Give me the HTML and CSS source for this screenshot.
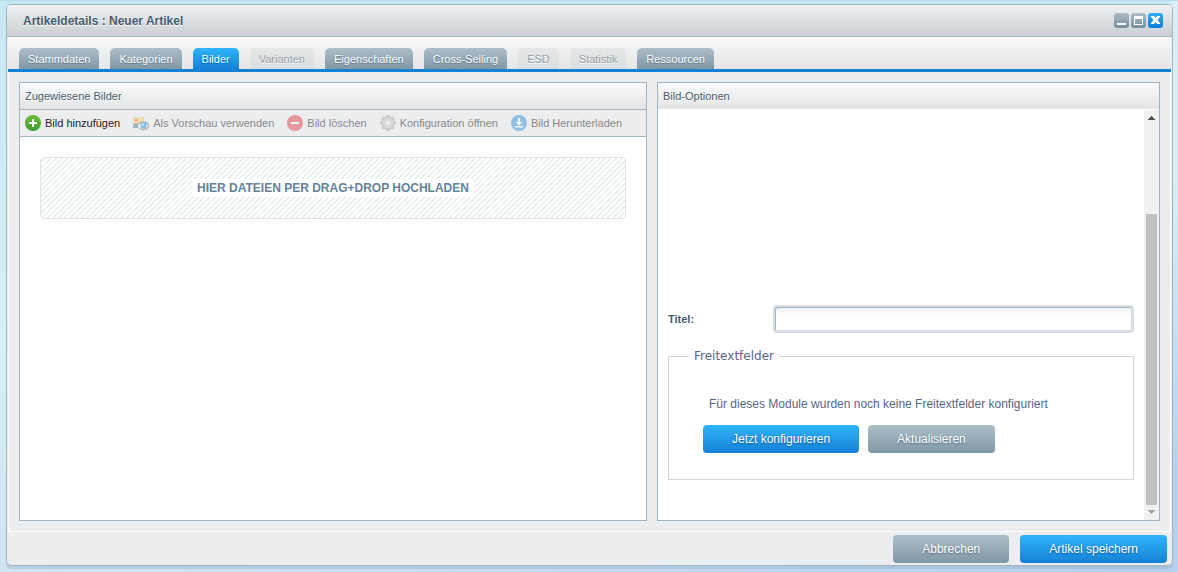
FILE: index.html
```html
<!DOCTYPE html>
<html lang="de">
<head>
<meta charset="utf-8">
<title>Artikeldetails : Neuer Artikel</title>
<link rel="stylesheet" href="styles.css">
</head>
<body>
<main class="window">
  <header class="titlebar">
    <h1 class="window-title">Artikeldetails : Neuer Artikel</h1>
    <div class="window-tools">
      <button class="tool" aria-label="Minimieren"><svg viewBox="0 0 15 15"><path d="M3 10h9v2H3z" fill="#fff"/></svg></button>
      <button class="tool" aria-label="Maximieren"><svg viewBox="0 0 15 15"><path fill-rule="evenodd" d="M3 3h9v9H3zM4 6v5h7V6z" fill="#fff"/></svg></button>
      <button class="tool tool-close" aria-label="Schließen"><svg viewBox="0 0 15 15"><path d="M3 3h3l1.500 2L9 3h3v1L9.500 7l2.500 3v1H9L7.500 9 6 11H3v-1l2.500-3L3 4z" fill="#fff"/></svg></button>
    </div>
  </header>
  <nav class="tabs">
    <button class="tab">Stammdaten</button>
    <button class="tab">Kategorien</button>
    <button class="tab tab-active">Bilder</button>
    <button class="tab" disabled>Varianten</button>
    <button class="tab">Eigenschaften</button>
    <button class="tab">Cross-Selling</button>
    <button class="tab" disabled>ESD</button>
    <button class="tab" disabled>Statistik</button>
    <button class="tab">Ressourcen</button>
  </nav>
  <div class="content">
    <section class="panel panel-images">
      <h2 class="panel-title">Zugewiesene Bilder</h2>
      <div class="toolbar">
        <button class="action"><svg class="icon" viewBox="0 0 16 16"><defs><linearGradient id="green" x2="0" y2="1"><stop stop-color="#6fbb3a"/><stop offset="1" stop-color="#3a9f2e"/></linearGradient></defs><circle cx="8" cy="8" r="8" fill="url(#green)"/><path d="M7 4h2v3h3v2H9v3H7V9H4V7h3z" fill="#fff"/></svg>Bild hinzufügen</button>
        <button class="action" disabled><svg class="icon" viewBox="0 0 16 16"><path d="M0 2h11v10H0z" fill="#fbcf70"/><path d="M0 9l3-1 3 1 5-2v6H0z" fill="#5f7fae"/><circle cx="3" cy="5" r="1.500" fill="#ee5a2b"/><path d="M4 11Q7 6.500 11 7q4 .5 4.800 4-2 3.500-5.800 3.500T4 11z" fill="#fff" stroke="#66737d" stroke-width="1.300"/><circle cx="10.500" cy="10.500" r="3.200" fill="#2c96d2"/><circle cx="9.800" cy="9.600" r="1.200" fill="#c4e7f8"/></svg>Als Vorschau verwenden</button>
        <button class="action" disabled><svg class="icon" viewBox="0 0 16 16"><circle cx="8" cy="8" r="8" fill="#e1434b"/><path d="M4 7h8v2H4z" fill="#fff"/></svg>Bild löschen</button>
        <button class="action" disabled><svg class="icon" viewBox="0 0 16 16"><g fill="#a6a8aa"><circle cx="8" cy="8" r="6.500"/><path d="M6.500 0h3l1 3h-5zM6.500 16h3l1-3h-5zM0 6.500v3l3 1v-5zM16 6.500v3l-3 1v-5z"/><path d="M6.500 0h3l1 3h-5zM6.500 16h3l1-3h-5zM0 6.500v3l3 1v-5zM16 6.500v3l-3 1v-5z" transform="rotate(45 8 8)"/></g><circle cx="8" cy="8" r="5.500" fill="#c4c6c8"/><circle cx="8" cy="8" r="2.800" fill="#f2f3f4" stroke="#a6a8aa" stroke-width=".6"/></svg>Konfiguration öffnen</button>
        <button class="action" disabled><svg class="icon" viewBox="0 0 16 16"><circle cx="8" cy="8" r="8" fill="#3c93d4"/><path d="M7 3h2v4h2.500L8 10.500 4.500 7H7zM4 11h8v1.500H4z" fill="#fff"/></svg>Bild Herunterladen</button>
      </div>
      <div class="drop-area">
        <div class="drop-zone"><span class="drop-text">HIER DATEIEN PER DRAG+DROP HOCHLADEN</span></div>
      </div>
    </section>
    <section class="panel panel-options">
      <h2 class="panel-title">Bild-Optionen</h2>
      <div class="options-body">
        <form class="options-form">
          <div class="field">
            <label class="field-label" for="titel">Titel:</label>
            <input class="field-input" id="titel" type="text">
          </div>
          <fieldset class="free-fields">
            <legend class="legend">Freitextfelder</legend>
            <p class="hint">Für dieses Module wurden noch keine Freitextfelder konfiguriert</p>
            <div class="free-actions">
              <button type="button" class="button button-primary">Jetzt konfigurieren</button>
              <button type="button" class="button">Aktualisieren</button>
            </div>
          </fieldset>
        </form>
        <div class="scrollbar" aria-hidden="true">
          <svg class="scroll-arrow" viewBox="0 0 15 17"><path d="M7 6h1v1h1v1h1v1h1v1H4V9h1V8h1V7h1z" fill="#505050"/></svg>
          <div class="scroll-track"><div class="scroll-thumb"></div></div>
          <svg class="scroll-arrow" viewBox="0 0 15 15"><path d="M4 5h7v1h-1v1H9v1H8v1H7V8H6V7H5V6H4z" fill="#a3a3a3"/></svg>
        </div>
      </div>
    </section>
  </div>
  <footer class="footer">
    <button class="button">Abbrechen</button>
    <button class="button button-primary">Artikel speichern</button>
  </footer>
</main>
</body>
</html>
```
FILE: styles.css
```css
* { box-sizing: border-box; }
body {
  margin: 0;
  height: 100vh;
  padding: 4px 5px 6px 6px;
  display: flex;
  font: 11px/16px "Liberation Sans", Arial, sans-serif;
  color: #475c6a;
  background:
    linear-gradient(#b9dae4, #b9dae4) top / 100% 1px no-repeat,
    linear-gradient(#d8eff5 30%, #b5d0f0 85%) right / 6px 100% no-repeat,
    linear-gradient(to right, #d0e4f1, #b5d0f0) bottom / 100% 6px no-repeat,
    linear-gradient(#c7e9f3, #d8eff5 60%, #d0e4f1);
}
h1, h2, p { margin: 0; font: inherit; }
button { font: inherit; color: inherit; border: 0; margin: 0; }
.window {
  flex: 1;
  display: flex;
  flex-direction: column;
  border: 1px solid #a3b4c1;
  border-radius: 5px;
  background: #ebedef;
  box-shadow: 0 3px 0 rgba(130, 160, 180, .3);
  overflow: hidden;
}
.titlebar {
  flex: none;
  height: 32px;
  display: flex;
  align-items: center;
  justify-content: space-between;
  padding: 0 9px 0 16px;
  border-bottom: 1px solid #a3b4c1;
  background: linear-gradient(#f0f1f2, #c8cfd4);
}
.window-title { font-size: 12px; font-weight: bold; text-shadow: 0 1px 0 #fff; }
.window-tools { display: flex; gap: 2px; }
.tool {
  width: 15px;
  height: 15px;
  padding: 0;
  border-radius: 3px;
  background: linear-gradient(#adbcc6, #758d9c);
}
.tool svg { display: block; width: 100%; height: 100%; }
.tool-close { background: linear-gradient(#2eb0fb, #0b7bd3); }
.tabs {
  flex: none;
  height: 35px;
  display: flex;
  align-items: flex-end;
  gap: 11px;
  margin: 0 1px;
  padding-left: 11px;
  border-bottom: 3px solid #1581d4;
  background: linear-gradient(#f8f8f8, #e3e5e7);
}
.tab {
  height: 21px;
  padding: 1px 9px 0;
  border-radius: 5px 5px 0 0;
  color: #fff;
  background: linear-gradient(#adbec8, #8098a6);
  text-shadow: 0 1px 1px #5c7180;
}
.tab-active { background: linear-gradient(#2fb4fb, #1581d4); text-shadow: 0 1px 1px #0c4dbb; }
.tab:disabled {
  color: #92a0aa;
  background: linear-gradient(#e4e6e7, #dcdfe1);
  text-shadow: 0 1px 0 #fff;
}
.content {
  flex: 1;
  min-height: 0;
  display: grid;
  grid-template-columns: 628fr 503fr;
  gap: 10px;
  margin: 0 1px;
  padding: 10px 10px;
  border: 1px solid #fff;
  border-top: 0;
}
.panel {
  min-width: 0;
  display: flex;
  flex-direction: column;
  border: 1px solid #a3b4c1;
  background: #fff;
}
.panel-title {
  flex: none;
  height: 27px;
  padding: 5px 5px;
  border-bottom: 1px solid #a3b4c1;
  background: linear-gradient(#fafafa, #e2e4e6);
  text-shadow: 0 1px 0 #fff;
}
.panel-options .panel-title { border-bottom-color: #fff; }
.toolbar {
  flex: none;
  height: 27px;
  display: flex;
  align-items: center;
  gap: 13px;
  padding: 0 5px;
  border-bottom: 1px solid #a3b4c1;
  background: #ebedef;
}
.action {
  display: flex;
  align-items: center;
  gap: 4px;
  padding: 0;
  white-space: nowrap;
  background: none;
  color: #222;
}
.action:disabled { opacity: .5; }
.icon { width: 16px; height: 16px; }
.drop-area { padding: 20px; }
.drop-zone {
  height: 62px;
  display: flex;
  align-items: center;
  justify-content: center;
  border: 1px solid #dce3e8;
  border-radius: 4px;
  background: repeating-linear-gradient(135deg, #fff 0, #fff 2px, #dbe5e5 3px, #fff 4px);
}
.drop-text {
  padding: 1px 5px;
  background: #fff;
  color: #64829a;
  font-size: 12px;
  font-weight: bold;
}
.options-body { flex: 1; min-height: 0; display: flex; }
.options-form {
  flex: 1;
  min-width: 0;
  display: flex;
  flex-direction: column;
  justify-content: flex-end;
  padding: 0 10px 40px;
}
.field { display: flex; align-items: center; margin-bottom: 16px; }
.field-label { width: 105px; font-weight: bold; }
.field-input {
  flex: 1;
  min-width: 0;
  height: 28px;
  padding: 0 6px;
  border: 2px solid #d7dde3;
  border-radius: 4px;
  background: linear-gradient(#edf0f1, #fff 9px);
  box-shadow: inset 1px 1px 0 #a3b4c1, inset -1px -1px 0 #d7dde3;
  font: inherit;
}
.free-fields {
  min-width: 0;
  margin: 0;
  padding: 33px 34px 26px;
  border: 1px solid #cfd5d9;
}
.legend {
  margin-left: -14px;
  padding: 0 5px;
  font: 12px/14px "DejaVu Sans", Verdana, sans-serif;
  color: #5a6586;
}
.hint { padding: 0 6px; font-size: 12px; line-height: 16px; color: #5a6586; }
.free-actions { display: flex; gap: 9px; margin-top: 13px; }
.button {
  height: 28px;
  padding: 0 29px;
  border-radius: 4px;
  font-size: 12px;
  white-space: nowrap;
  color: #fff;
  background: linear-gradient(#adbec8, #8098a6);
  text-shadow: 0 1px 2px #536b7b;
}
.button-primary { background: linear-gradient(#2fb4fb, #1581d4); text-shadow: 0 1px 2px #0b5598; }
.scrollbar {
  flex: none;
  width: 15px;
  display: flex;
  flex-direction: column;
  background: #f1f1f1;
}
.scroll-arrow { display: block; flex: none; width: 15px; }
.scroll-track { flex: 1; display: flex; flex-direction: column; justify-content: flex-end; padding: 0 2px; }
.scroll-thumb { height: 77%; background: #c1c1c1; }
.footer {
  flex: none;
  display: flex;
  justify-content: flex-end;
  gap: 11px;
  padding: 3px 5px 2px;
}
```
